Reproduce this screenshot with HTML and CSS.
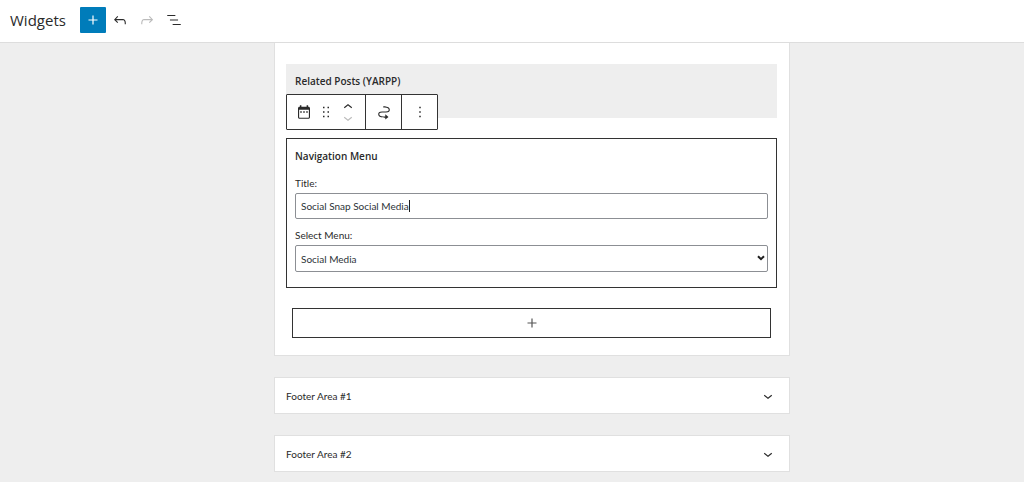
FILE: index.html
```
<!DOCTYPE html>
<html lang="en">
<head>
<meta charset="utf-8">
<title>Widgets</title>
<link rel="stylesheet" href="styles.css">
</head>
<body>
<header class="header">
  <h1 class="header-title">Widgets</h1>
  <div class="header-tools">
    <button class="tool tool-primary" type="button" aria-label="Add block"><svg class="icon" viewBox="0 0 24 24"><path d="M18 11.2h-5.2V6h-1.6v5.2H6v1.6h5.2V18h1.6v-5.2H18z"/></svg></button>
    <button class="tool" type="button" aria-label="Undo"><svg class="icon" viewBox="0 0 24 24"><path d="M18.3 11.7c-.6-.6-1.4-.9-2.3-.9H6.7l2.9-3.3-1.1-1-4.5 5L8.5 16l1-1-2.7-2.7H16c.5 0 .9.2 1.3.5 1 1 1 3.4 1 4.5v.3h1.5v-.2c0-1.5 0-4.3-1.5-5.7z"/></svg></button>
    <button class="tool" type="button" aria-label="Redo" disabled><svg class="icon" viewBox="0 0 24 24"><path d="M15.6 6.5l-1.1 1 2.9 3.3H8c-.9 0-1.7.3-2.3.9-1.4 1.5-1.4 4.2-1.4 5.6v.2h1.5v-.3c0-1.1 0-3.5 1-4.5.3-.3.7-.5 1.3-.5h9.2L14.5 15l1.1 1.1 4.6-4.6-4.6-5z"/></svg></button>
    <button class="tool" type="button" aria-label="List view"><svg class="icon" viewBox="0 0 24 24"><path d="M13.8 5.2H3v1.5h10.8V5.2zm-3.6 12v1.5H21v-1.5H10.2zm7.2-6H6.6v1.5h10.8v-1.5z"/></svg></button>
  </div>
</header>
<main class="content">
  <div class="areas">
    <section class="panel panel-open">
      <article class="widget-preview">
        <h2 class="widget-title">Related Posts (YARPP)</h2>
        <div class="toolbar" role="toolbar" aria-label="Block tools">
          <div class="toolbar-group">
            <button class="toolbar-button" type="button" aria-label="Navigation Menu"><svg class="icon" viewBox="0 0 24 24"><path fill-rule="evenodd" d="M6.500 3h2v2h7V3h2v2H18c1.100 0 2 .9 2 2v12c0 1.100-.9 2-2 2H6c-1.100 0-2-.9-2-2V7c0-1.100.9-2 2-2h.5zM5.500 9v10c0 .3.2.5.5.5h12c.3 0 .5-.2.5-.5V9zM7 11h2v2H7zm4 0h2v2h-2zm4 0h2v2h-2z"/></svg></button>
            <button class="toolbar-button" type="button" aria-label="Drag"><svg class="icon" viewBox="0 0 24 24"><path d="M8 7h2V5H8v2zm0 6h2v-2H8v2zm0 6h2v-2H8v2zm6-14v2h2V5h-2zm0 8h2v-2h-2v2zm0 6h2v-2h-2v2z"/></svg></button>
            <div class="mover">
              <button class="mover-button" type="button" aria-label="Move up"><svg class="icon" viewBox="0 0 24 24"><path d="M6.500 12.400L12 8l5.500 4.400-.9 1.200L12 10l-4.500 3.600-1-1.200z"/></svg></button>
              <button class="mover-button" type="button" aria-label="Move down" disabled><svg class="icon" viewBox="0 0 24 24"><path d="M17.500 11.600L12 16l-5.500-4.400.9-1.200L12 14l4.500-3.600 1 1.200z"/></svg></button>
            </div>
          </div>
          <div class="toolbar-group">
            <button class="toolbar-button" type="button" aria-label="Move to widget area"><svg class="icon" viewBox="0 0 24 24"><path d="M19.750 9c0-1.257-.565-2.197-1.390-2.858-.797-.640-1.827-1.017-2.815-1.247-1.802-.420-3.703-.403-4.383-.396L11 4.500V6l.177-.001c.696-.006 2.416-.020 4.028.356.887.207 1.670.518 2.216.957.520.416.829.945.829 1.688 0 .592-.167.966-.407 1.230-.255.281-.656.508-1.236.674-1.190.340-2.820.346-4.607.346h-.077c-1.692 0-3.527 0-4.942.404-.732.209-1.424.545-1.935 1.108-.526.579-.796 1.330-.796 2.238 0 1.257.565 2.197 1.390 2.858.797.640 1.827 1.017 2.815 1.247 1.802.420 3.703.403 4.383.396L13 19.500h.714V22L18 18.500 13.714 15v3H13l-.177.001c-.696.006-2.416.020-4.028-.356-.887-.207-1.670-.518-2.216-.957-.520-.416-.829-.945-.829-1.688 0-.592.167-.966.407-1.230.255-.281.656-.508 1.237-.674 1.189-.340 2.819-.346 4.606-.346h.077c1.692 0 3.527 0 4.941-.404.732-.209 1.425-.545 1.936-1.108.526-.579.796-1.330.796-2.238z"/></svg></button>
          </div>
          <div class="toolbar-group">
            <button class="toolbar-button" type="button" aria-label="Options"><svg class="icon" viewBox="0 0 24 24"><path d="M13 19h-2v-2h2v2zm0-6h-2v-2h2v2zm0-6h-2V5h2v2z"/></svg></button>
          </div>
        </div>
      </article>
      <form class="widget-form">
        <h2 class="widget-title">Navigation Menu</h2>
        <label class="field-label" for="menu-title">Title:</label>
        <div class="field">
          <input class="control" id="menu-title" type="text" value="Social Snap Social Media">
          <span class="caret"></span>
        </div>
        <label class="field-label" for="menu-select">Select Menu:</label>
        <div class="field">
          <select class="control control-select" id="menu-select"><option>Social Media</option></select>
          <svg class="select-arrow" viewBox="0 0 8 6"><path d="M1 1.200l3 3 3-3"/></svg>
        </div>
      </form>
      <button class="appender" type="button" aria-label="Add block"><svg class="icon" viewBox="0 0 24 24"><path d="M18 11.200h-5.200V6h-1.600v5.200H6v1.600h5.200V18h1.600v-5.200H18z"/></svg></button>
    </section>
    <section class="panel">
      <button class="panel-toggle" type="button">Footer Area #1<svg class="icon" viewBox="0 0 24 24"><path d="M17.500 11.600L12 16l-5.500-4.400.9-1.200L12 14l4.500-3.600 1 1.200z"/></svg></button>
    </section>
    <section class="panel">
      <button class="panel-toggle" type="button">Footer Area #2<svg class="icon" viewBox="0 0 24 24"><path d="M17.500 11.600L12 16l-5.500-4.400.9-1.200L12 14l4.500-3.600 1 1.200z"/></svg></button>
    </section>
  </div>
</main>
</body>
</html>
```
FILE: styles.css
```
* {
  box-sizing: border-box;
}

body {
  margin: 0;
  min-height: 100vh;
  background: #eee;
  color: #2a2a2a;
  font: 10px/14px Lato, "Open Sans", sans-serif;
}

button {
  display: flex;
  align-items: center;
  justify-content: center;
  padding: 0;
  border: 0;
  background: none;
  color: inherit;
  font: inherit;
}

button:disabled {
  color: #bbb;
}

h1,
h2 {
  margin: 0;
  font-family: "Open Sans", "Noto Sans", sans-serif;
}

.icon {
  flex: none;
  width: 18px;
  height: 18px;
  fill: currentColor;
}

.header {
  display: flex;
  align-items: center;
  gap: 14px;
  padding: 7px 10px 9px;
  border-bottom: 1px solid #ddd;
  background: #fff;
}

.header-title {
  font-size: 15px;
  font-weight: 400;
  line-height: 20px;
}

.header-tools {
  display: flex;
  gap: 1px;
}

.tool {
  width: 26px;
  height: 26px;
}

.tool-primary {
  border-radius: 1px;
  background: #007cba;
  color: #fff;
}

.content {
  padding-left: 40px;
}

.areas {
  display: flex;
  flex-direction: column;
  gap: 20px;
  max-width: 516px;
  margin: 0 auto;
}

.panel {
  border: 1px solid #e0e0e0;
  background: #fff;
}

.panel + .panel {
  margin-top: 1px;
}

.panel-open {
  display: flex;
  flex-direction: column;
  gap: 20px;
  padding: 21px 12px 17px 11px;
  border-top: 0;
}

.widget-preview {
  position: relative;
  min-height: 54px;
  padding: 10px 9px;
  background: #eee;
}

.widget-title {
  font-size: 10px;
  font-weight: 600;
  line-height: 14px;
}

.toolbar {
  position: absolute;
  top: 30px;
  left: 0;
  display: flex;
  border: 1px solid #333;
  border-radius: 1px;
  background: #fff;
}

.toolbar-group {
  display: flex;
  height: 34px;
  padding: 0 6px;
}

.toolbar-group + .toolbar-group {
  padding: 0 6px 0 7px;
  border-left: 1px solid #333;
}

.toolbar-button,
.mover-button {
  width: 22px;
}

.mover {
  display: flex;
  flex-direction: column;
  justify-content: center;
}

.mover-button {
  height: 11px;
}

.widget-form {
  padding: 10px 8px 15px;
  border: 1px solid #333;
}

.field-label {
  display: block;
  margin-top: 13px;
  margin-bottom: 3px;
}

.field {
  position: relative;
}

.field + .field-label {
  margin-top: 9px;
}

.control {
  display: block;
  width: 100%;
  height: 26px;
  padding: 0 5px;
  border: 1px solid #8c8f94;
  border-radius: 2px;
  outline: 0;
  background: #fff;
  color: #2c3338;
  font: inherit;
}

.control-select {
  height: 27px;
  appearance: none;
}

.caret {
  position: absolute;
  top: 7px;
  left: 114px;
  width: 1px;
  height: 12px;
  background: #1e1e1e;
}

.select-arrow {
  position: absolute;
  top: 10px;
  right: 3px;
  width: 8px;
  height: 6px;
  fill: none;
  stroke: #1e1e1e;
  stroke-width: 2;
  pointer-events: none;
}

.appender {
  height: 30px;
  margin: 0 6px;
  border: 1px solid #333;
  color: #555;
}

.panel-toggle {
  justify-content: space-between;
  width: 100%;
  height: 35px;
  padding: 0 12px 0 11px;
}
```
